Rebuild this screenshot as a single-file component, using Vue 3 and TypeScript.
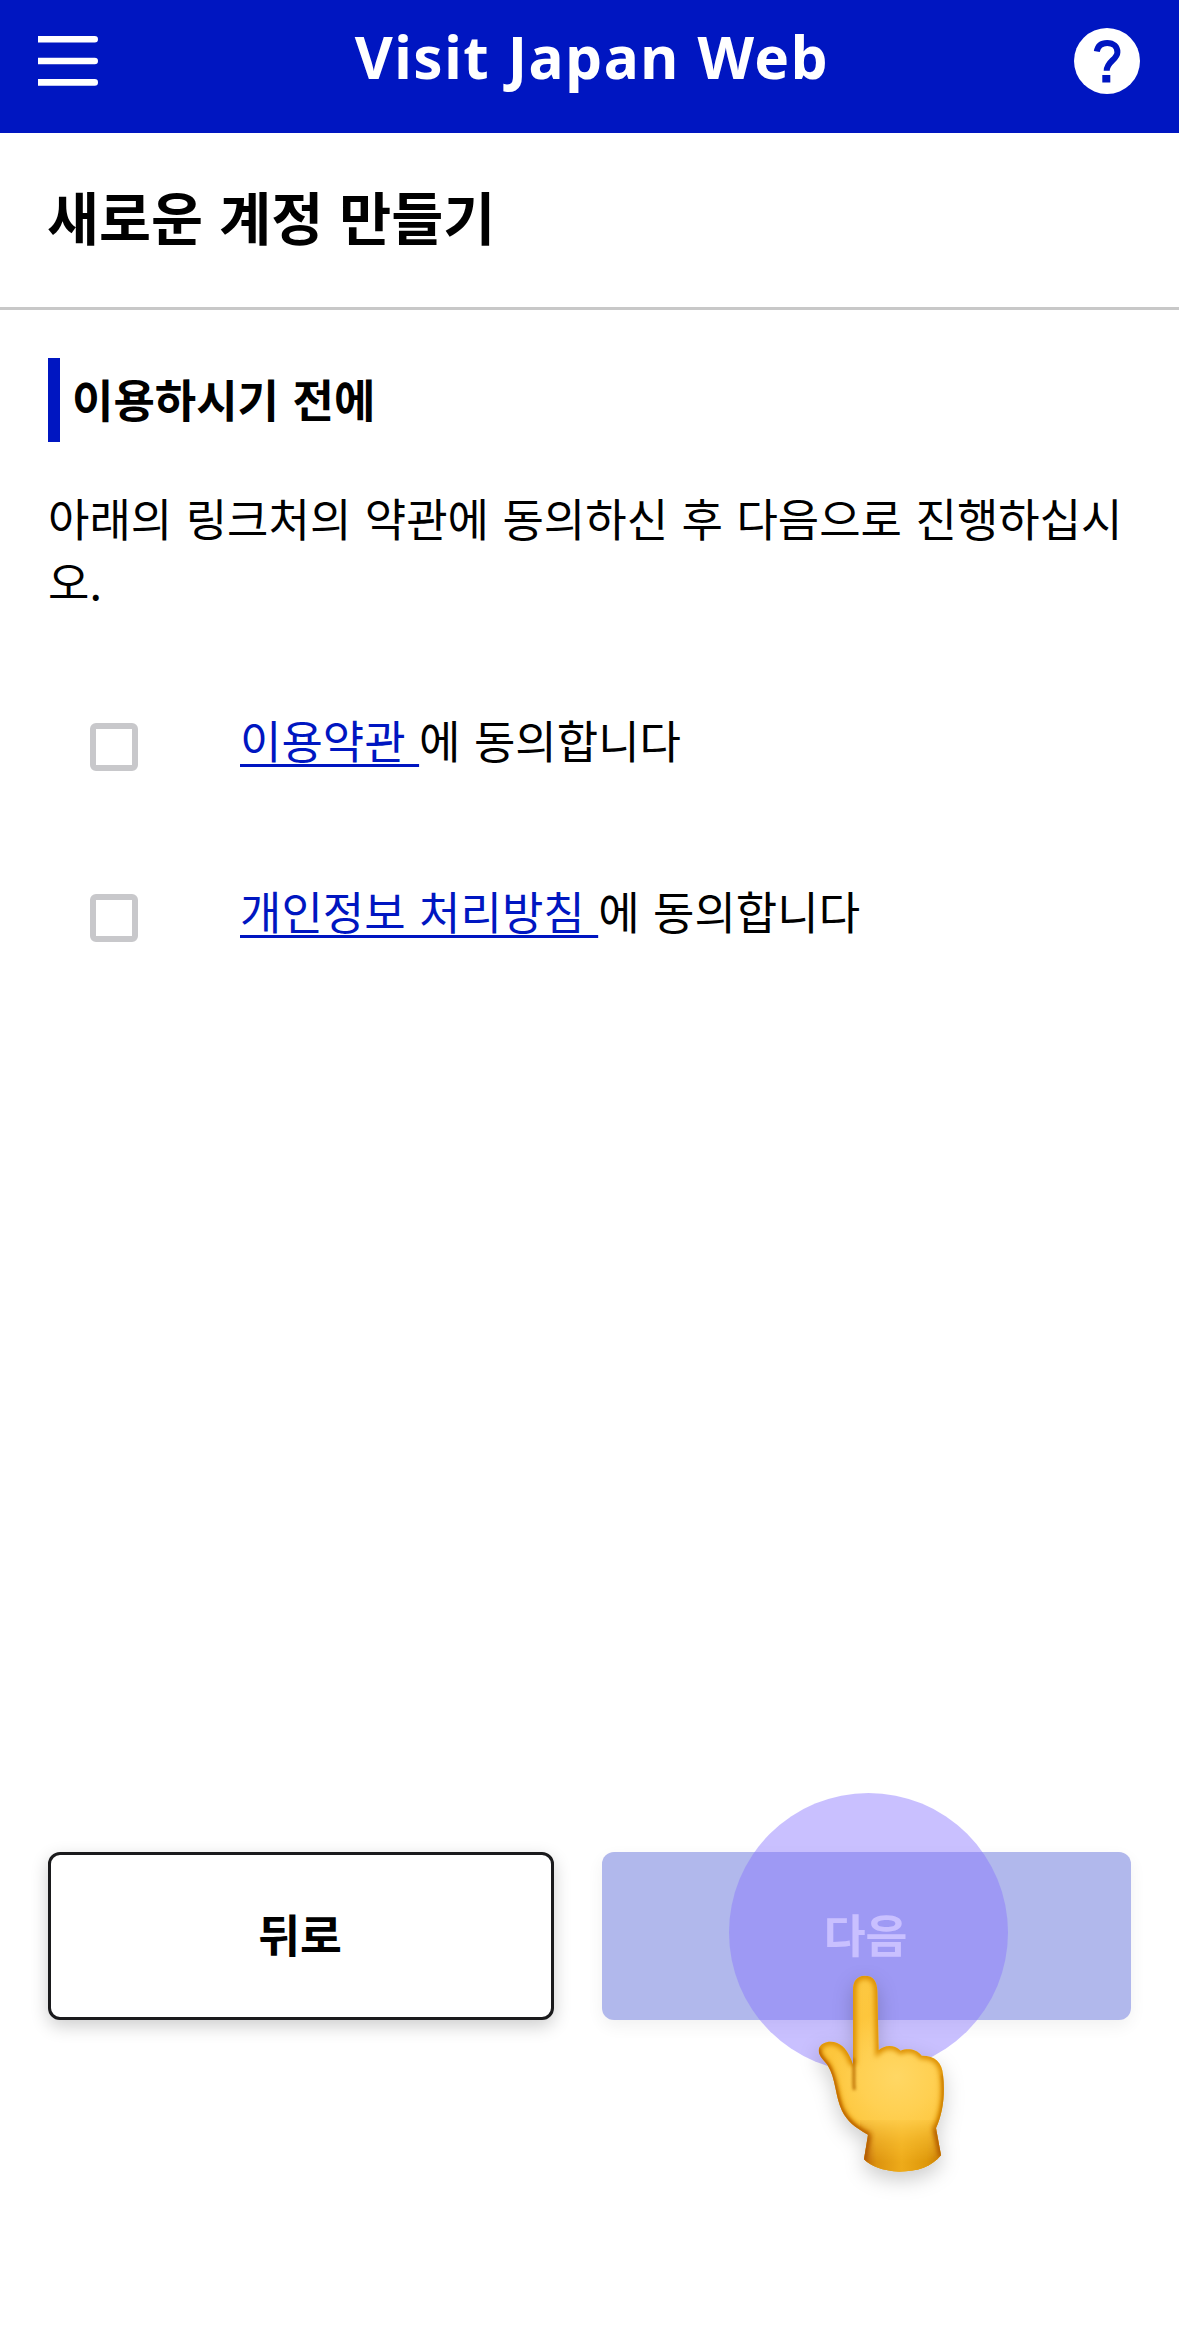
<script setup lang="ts">
interface Agreement {
  id: string
  link: string
}

const agreements: Agreement[] = [
  { id: 'terms', link: '이용약관' },
  { id: 'privacy', link: '개인정보 처리방침' },
]
</script>

<template>
  <div class="page">
    <header class="bar">
      <svg class="menu" viewBox="0 0 60 50" aria-label="menu">
        <path d="M0 0h56.700a3.300 3.300 0 0 1 0 6.600H0zM0 21.700h56.700a3.300 3.300 0 0 1 0 6.600H0zM0 43.100h56.700a3.300 3.300 0 0 1 0 6.600H0z" fill="#fff" />
      </svg>
      <div class="brand">Visit Japan Web</div>
      <svg class="help" viewBox="0 0 66 66" aria-label="help">
        <circle cx="33" cy="33" r="33" fill="#fff" />
        <path d="M22.800 23.500C23.800 17.500 27.600 14.900 33.200 14.900C39.600 14.900 43.400 18.800 43.400 24.200C43.400 31.500 32.700 33.500 32.700 42.800" fill="none" stroke="#0016c1" stroke-width="6" />
        <rect x="28.300" y="47" width="8" height="7.500" fill="#0016c1" />
      </svg>
    </header>

    <div class="title"><h1>새로운 계정 만들기</h1></div>

    <main>
      <h2>이용하시기 전에</h2>
      <p class="lead">아래의 링크처의 약관에 동의하신 후 다음으로 진행하십시오.</p>
      <ul>
        <li v-for="a in agreements" :key="a.id">
          <span class="box"></span>
          <span class="label"><a>{{ a.link + ' ' }}</a>에 동의합니다</span>
        </li>
      </ul>
    </main>

    <footer>
      <button class="btn back">뒤로</button>
      <div class="next-wrap">
        <button class="btn next">다음</button>
        <span class="touch"></span>
        <svg class="hand" viewBox="0 0 600 810">
          <defs>
            <radialGradient id="skin" gradientUnits="userSpaceOnUse" cx="350" cy="410" r="310">
              <stop offset="0" stop-color="#ffd764" />
              <stop offset=".35" stop-color="#ffd052" />
              <stop offset=".65" stop-color="#fdc63c" />
              <stop offset="1" stop-color="#fcc842" />
            </radialGradient>
            <linearGradient id="cuff" x1="0" y1="0" x2="1" y2="0">
              <stop offset="0" stop-color="#b35a08" />
              <stop offset=".2" stop-color="#dc930f" />
              <stop offset=".5" stop-color="#eeab1a" />
              <stop offset=".8" stop-color="#de980a" />
              <stop offset="1" stop-color="#c57806" />
            </linearGradient>
            <linearGradient id="cuffFade" x1="0" y1="0" x2="0" y2="1">
              <stop offset="0" stop-color="#fff" stop-opacity="0" />
              <stop offset=".8" stop-color="#fff" />
            </linearGradient>
            <mask id="cuffMask"><rect x="240" y="530" width="260" height="170" fill="url(#cuffFade)" /></mask>
            <filter id="soft" x="-20%" y="-20%" width="140%" height="140%"><feGaussianBlur stdDeviation="8" /></filter>
            <filter id="fine" filterUnits="userSpaceOnUse" x="80" y="80" width="440" height="640"><feGaussianBlur stdDeviation="5" /></filter>
            <path id="outline" d="M219 150C219 124 230 108 254 107C280 107 291 124 292 152L296 331C312 316 340 311 362 332C382 325 408 326 425 347C466 347 486 368 489 404C496 462 489 520 468 564L483 646C455 680 413 695 358 695C309 693 272 679 252 658L264 584C225 562 201 543 186 512C166 472 168 416 143 376C130 358 112 345 117 325C124 306 151 301 171 309C195 318 209 345 219 374Z" />
            <clipPath id="handClip"><use href="#outline" /></clipPath>
          </defs>
          <use href="#outline" fill="url(#skin)" />
          <g clip-path="url(#handClip)">
            <use href="#outline" fill="none" stroke="#dc8e06" stroke-width="20" filter="url(#soft)" />
            <path d="M240 540H490V700H240Z" fill="url(#cuff)" mask="url(#cuffMask)" />
            <path d="M264 584L250 665M468 564L486 650" fill="none" stroke="#a94f06" stroke-width="14" filter="url(#soft)" />
            <path d="M117 325C112 345 130 358 143 376C168 416 166 472 186 512C201 543 225 562 264 584" fill="none" stroke="#bd6503" stroke-width="12" filter="url(#fine)" />
            <path d="M219 355C225 385 219 420 223 450" fill="none" stroke="#b86b03" stroke-width="8" filter="url(#fine)" />
            <path d="M489 404C496 462 489 520 468 564" fill="none" stroke="#c87905" stroke-width="9" filter="url(#fine)" />
          </g>
        </svg>
      </div>
    </footer>
  </div>
</template>

<style>
body {
  margin: 0;
  background: #fff;
}
</style>

<style scoped>
.page {
  width: 1179px;
  height: 2350px;
  display: flex;
  flex-direction: column;
  background: #fff;
  color: #000;
  font-family: "Noto Sans CJK KR", sans-serif;
  font-size: 45px;
  word-spacing: 3.4px;
  overflow: hidden;
}
.bar {
  height: 133px;
  box-sizing: border-box;
  padding: 0 39px 11px 38px;
  display: flex;
  align-items: center;
  justify-content: space-between;
  background: #0016c1;
  color: #fff;
}
.menu {
  width: 60px;
  height: 50px;
}
.brand {
  font: 700 58.5px/80px "Noto Sans", sans-serif;
  letter-spacing: 1.5px;
  word-spacing: 1px;
  margin-top: -10px;
  padding-left: 12px;
}
.help {
  width: 66px;
  height: 66px;
}
.title {
  height: 174px;
  box-sizing: content-box;
  padding: 0 47px;
  border-bottom: 3px solid #c8c8c8;
  display: flex;
  align-items: center;
}
h1 {
  margin: 0;
  padding-bottom: 10px;
  font-size: 56.5px;
  line-height: 84px;
  font-weight: 700;
}
main {
  flex: 1;
  padding: 48px 48px 0;
}
h2 {
  margin: 0;
  height: 84px;
  border-left: 12px solid #0016c1;
  padding-left: 12px;
  font-size: 45px;
  line-height: 81px;
  font-weight: 700;
}
.lead {
  margin: 44px 0 0;
  line-height: 63px;
  word-break: break-all;
}
ul {
  list-style: none;
  margin: 102px 0 0;
  padding: 0 42px;
  display: flex;
  flex-direction: column;
  gap: 105px;
}
li {
  display: flex;
  align-items: center;
  gap: 102px;
  height: 66px;
}
.box {
  box-sizing: border-box;
  width: 48px;
  height: 48px;
  border: 6px solid #c8c8cb;
  border-radius: 6px;
}
.label {
  line-height: 66px;
  padding-bottom: 14px;
  white-space: pre;
}
a {
  color: #0016c1;
  text-decoration: underline;
  text-decoration-thickness: 3px;
  text-decoration-skip-ink: none;
  text-underline-offset: 5px;
}
footer {
  display: flex;
  gap: 48px;
  padding: 0 48px 330px;
}
.btn {
  box-sizing: border-box;
  height: 168px;
  padding: 0 2px 6px 0;
  font: inherit;
  font-size: 45.5px;
  font-weight: 700;
  border-radius: 12px;
  box-shadow: 0 6px 18px rgba(0, 0, 0, 0.2);
}
.back {
  width: 506px;
  border: 3px solid #1a1a1c;
  background: #fff;
  color: #000;
}
.next-wrap {
  position: relative;
  width: 529px;
}
.next {
  display: block;
  width: 100%;
  border: 0;
  background: #0016c1;
  color: #fff;
  opacity: 0.3;
}
.touch {
  position: absolute;
  left: 127px;
  top: -59px;
  width: 279px;
  height: 279px;
  border-radius: 50%;
  background: rgba(135, 115, 255, 0.45);
}
.hand {
  position: absolute;
  left: 178px;
  top: 88px;
  width: 200px;
  height: 270px;
  overflow: visible;
  filter: drop-shadow(0 8px 10px rgba(0, 0, 0, 0.2));
}
</style>
